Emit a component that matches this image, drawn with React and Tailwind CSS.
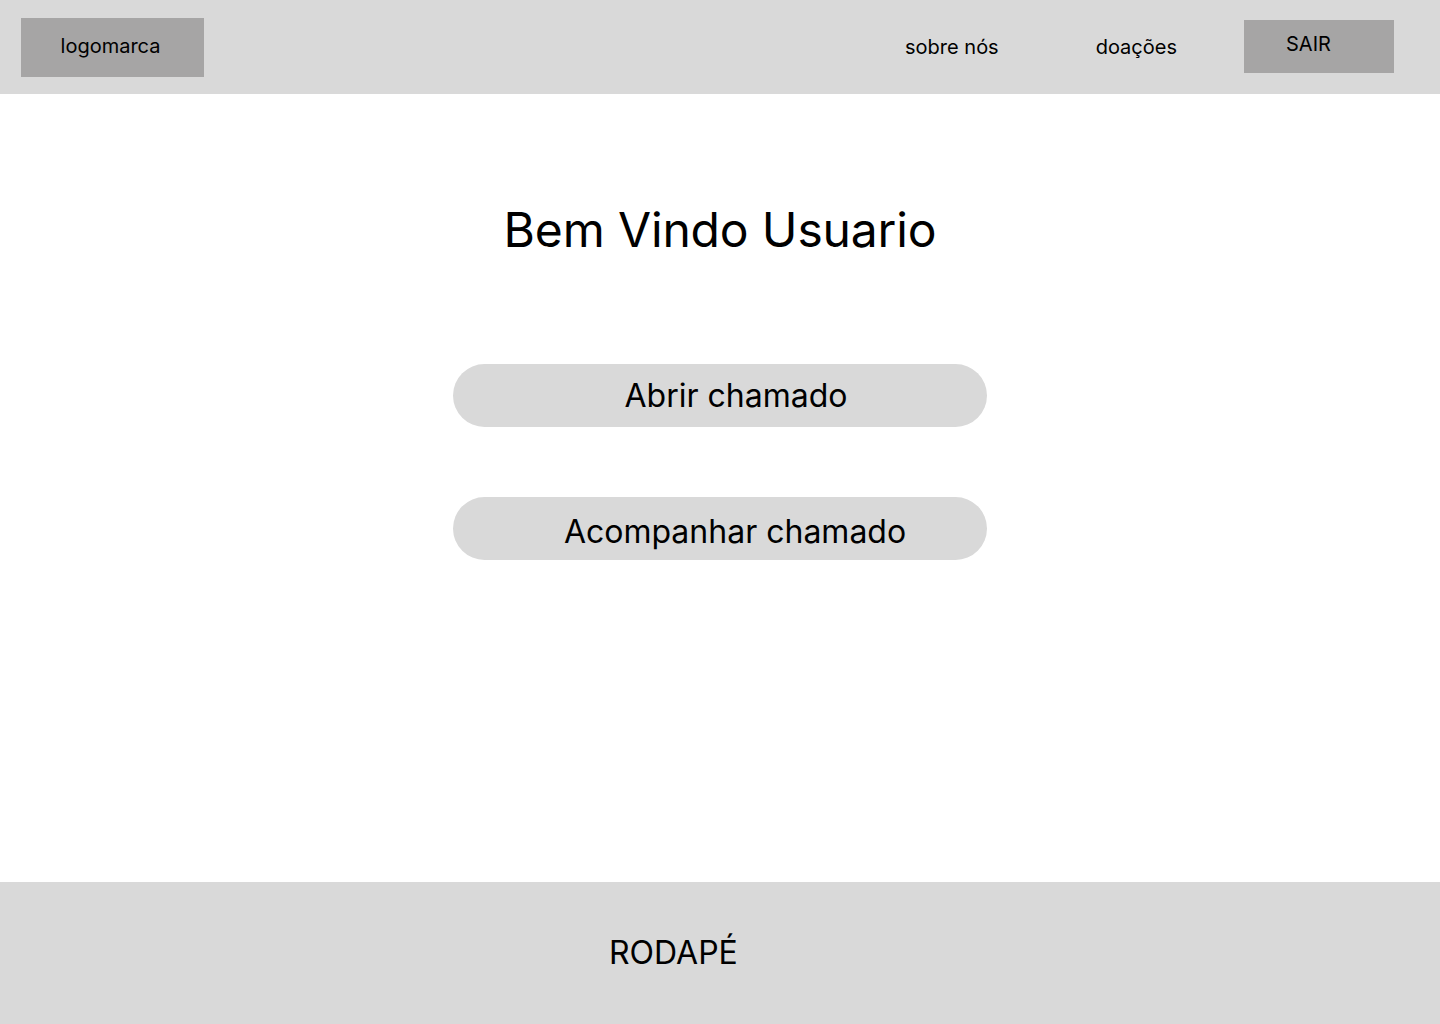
export default function App() {
  return (
    <div className="min-h-screen flex flex-col bg-white text-black font-['Inter',sans-serif]">
      {/* Header */}
      <header className="h-[94px] bg-[#d9d9d9] flex items-start">
        <div className="ml-[21px] mt-[18px] w-[183px] h-[59px] bg-[#a6a5a5] flex items-center justify-center pr-[4px] pb-[3px] text-[20px]">
          logomarca
        </div>
        <div className="flex-1" />
        <nav className="h-[94px] flex items-center text-[20px]">
          <a className="pl-[1px]">sobre nós</a>
          <a className="ml-[97px]">doações</a>
        </nav>
        <button className="ml-[67px] mr-[46px] mt-[20px] w-[150px] h-[53px] bg-[#a6a5a5] flex items-start pl-[42px] pt-[12px] text-[20px] leading-[24px]">
          SAIR
        </button>
      </header>

      {/* Main */}
      <main className="flex-1 flex flex-col items-center">
        <h1 className="mt-[107px] text-[48px] leading-[58px] tracking-[-0.15px]">Bem Vindo Usuario</h1>

        <button className="mt-[105px] w-[534px] h-[63px] rounded-full bg-[#d9d9d9] flex items-center justify-center pl-[32px] text-[32px]">
          Abrir chamado
        </button>
        <button className="mt-[70px] w-[534px] h-[63px] rounded-full bg-[#d9d9d9] flex items-center justify-center pl-[30px] pt-[6px] text-[32px]">
          Acompanhar chamado
        </button>
      </main>

      {/* Footer */}
      <footer className="h-[142px] bg-[#d9d9d9] flex items-center pl-[609px] text-[32px]">
        RODAPÉ
      </footer>
    </div>
  );
}
